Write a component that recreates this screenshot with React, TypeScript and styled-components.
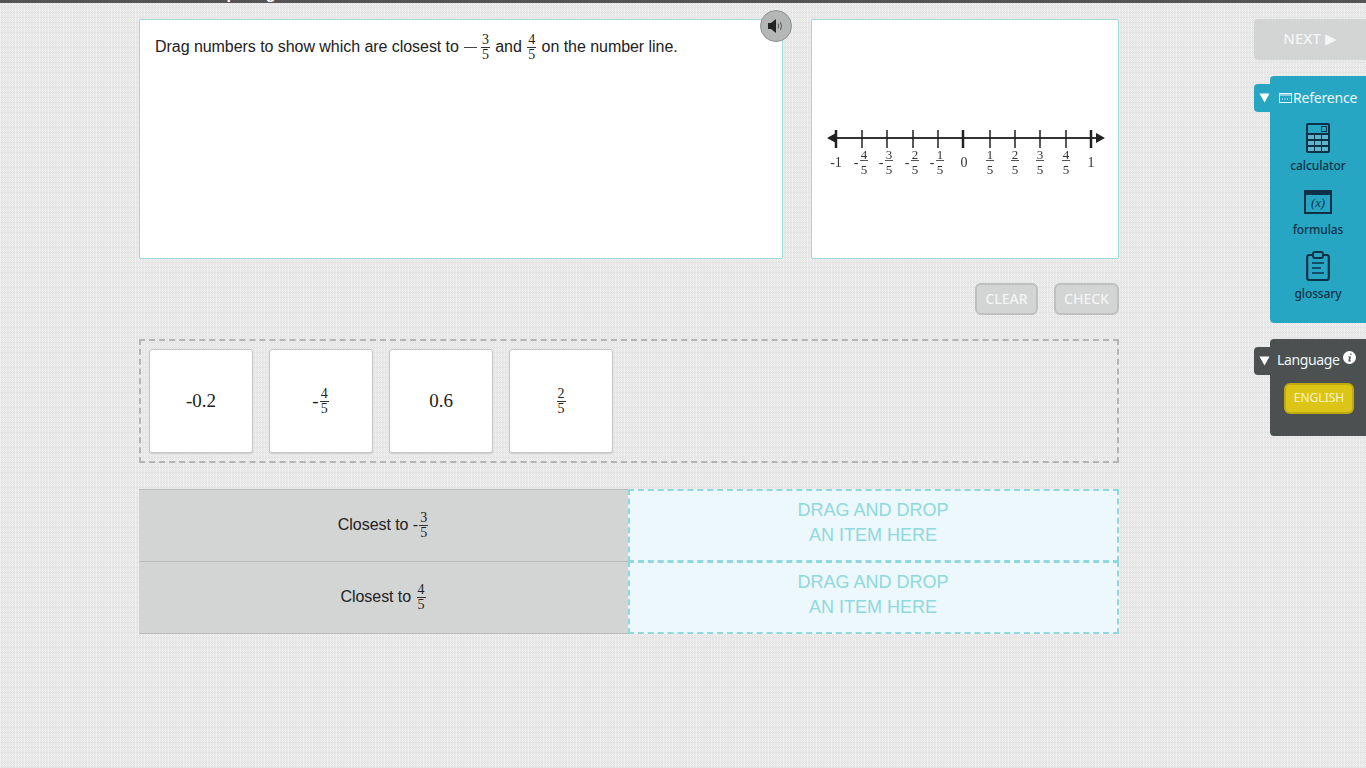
import React from "react";
import styled, { createGlobalStyle } from "styled-components";

const GlobalStyle = createGlobalStyle`
  html, body {
    margin: 0;
    padding: 0;
  }
  body {
    height: 768px;
    overflow: hidden;
    font-family: "Liberation Sans", Arial, sans-serif;
    color: #222;
    background-color: #e9e9e9;
    background-image:
      repeating-linear-gradient(90deg, rgba(255, 255, 255, 0.22) 0 1px, transparent 1px 3px),
      repeating-linear-gradient(0deg, rgba(0, 0, 0, 0.025) 0 1px, transparent 1px 5px),
      repeating-conic-gradient(#e3e3e3 0 25%, #ededed 0 50%);
    background-size: auto, auto, 2px 2px;
  }
`;

const SIDE_FONT = `"Noto Sans", "Open Sans", sans-serif`;
const NAVY = "#0e3148";

const TopBar = styled.div`
  height: 3px;
  padding-left: 191px;
  background: #555;
  overflow: hidden;
`;

const TopTitle = styled.div`
  margin-top: -14px;
  color: #fff;
  font-size: 16px;
  font-weight: bold;
  line-height: 16px;
`;

const Page = styled.div`
  display: flex;
  align-items: flex-start;
  padding: 16px 0 0 139px;
`;

const Main = styled.main`
  width: 980px;
`;

const TopRow = styled.div`
  display: flex;
  gap: 28px;
`;

const Panel = styled.section<{ $width: number }>`
  position: relative;
  box-sizing: border-box;
  width: ${(p) => p.$width}px;
  height: 240px;
  background: #fff;
  border: 1px solid #9fd9dc;
  border-radius: 2px;
`;

const Question = styled.p`
  display: flex;
  align-items: center;
  height: 26px;
  margin: 0;
  padding: 14px 15px 0;
  font-size: 16px;
  letter-spacing: -0.05px;
  white-space: pre;
  color: #222;
`;

const Minus = styled.span`
  display: inline-block;
  width: 13px;
  height: 1px;
  margin: 1px 3px 0 5px;
  background: #444;
`;

const SpeakerButton = styled.button`
  position: absolute;
  top: -10px;
  right: -10px;
  display: flex;
  align-items: center;
  justify-content: center;
  box-sizing: border-box;
  width: 32px;
  height: 32px;
  padding: 0;
  border: 1px solid #8f9292;
  border-radius: 50%;
  background: #b5b7b7;
`;

const FractionBox = styled.span`
  display: inline-flex;
  flex-direction: column;
  align-items: center;
  vertical-align: middle;
  margin: 0 1px;
  font-family: "Liberation Serif", "Times New Roman", serif;
  font-size: 14px;
  line-height: 12px;
  letter-spacing: 0;
  color: #222;
`;

const FractionTop = styled.span`
  display: block;
  padding: 0 1px 1px;
  border-bottom: 1px solid #333;
`;

const FractionBottom = styled.span`
  display: block;
  padding: 1px 1px 0;
`;

const Fraction = ({ top, bottom }: { top: number; bottom: number }) => (
  <FractionBox>
    <FractionTop>{top}</FractionTop>
    <FractionBottom>{bottom}</FractionBottom>
  </FractionBox>
);

const Actions = styled.div`
  display: flex;
  justify-content: flex-end;
  gap: 16px;
  margin-top: 24px;
`;

const ActionButton = styled.button<{ $width: number }>`
  box-sizing: border-box;
  width: ${(p) => p.$width}px;
  height: 32px;
  padding: 0 0 2px;
  border: 2px solid #bfc1c1;
  border-radius: 6px;
  background: #d3d4d4;
  color: #f3f4f4;
  font-family: ${SIDE_FONT};
  font-size: 14px;
  font-weight: 500;
`;

const Tray = styled.div`
  display: flex;
  gap: 16px;
  box-sizing: border-box;
  height: 124px;
  margin-top: 24px;
  padding: 8px;
  border: 2px dashed #b4b4b4;
`;

const Card = styled.div`
  display: flex;
  align-items: center;
  justify-content: center;
  box-sizing: border-box;
  width: 104px;
  height: 104px;
  background: #fff;
  border: 1px solid #c6c6c6;
  border-radius: 3px;
  box-shadow: 0 1px 1px rgba(0, 0, 0, 0.12);
  font-family: "Liberation Serif", "Times New Roman", serif;
  font-size: 19px;
  color: #222;
`;

const MatchTable = styled.div`
  display: grid;
  grid-template-columns: 489px 491px;
  grid-auto-rows: 72px;
  margin-top: 26px;
  border-bottom: 1px solid #b9b9b9;
`;

const RowLabel = styled.div`
  box-sizing: border-box;
  padding-top: 21px;
  background: #d3d4d4;
  border-top: 1px solid #bcbcbc;
  font-size: 16px;
  letter-spacing: -0.05px;
  line-height: 28px;
  text-align: center;
  color: #222;
`;

const DropZone = styled.div`
  display: flex;
  align-items: center;
  justify-content: center;
  box-sizing: border-box;
  height: 73px;
  padding: 0 1px 6px 0;
  background: #ecf8fb;
  border: 2px dashed #8fd8de;
  color: #8fd8de;
  font-size: 18px;
  line-height: 25px;
  text-align: center;
`;

const Side = styled.aside`
  display: flex;
  flex-direction: column;
  width: 112px;
  margin-left: 135px;
  font-family: ${SIDE_FONT};
`;

const NextButton = styled.button`
  box-sizing: border-box;
  width: 112px;
  height: 41px;
  padding: 0 0 4px;
  border: 0;
  border-radius: 4px 0 0 4px;
  background: #d3d4d4;
  color: #f5f5f5;
  font-family: ${SIDE_FONT};
  font-size: 15px;
  font-weight: 500;
`;

const SidePanel = styled.section<{ $color: string; $height: number; $top: number }>`
  position: relative;
  box-sizing: border-box;
  width: 96px;
  height: ${(p) => p.$height}px;
  margin: ${(p) => p.$top}px 0 0 16px;
  background: ${(p) => p.$color};
  border-radius: 4px 0 0 4px;
`;

const PanelTab = styled.span<{ $color: string }>`
  position: absolute;
  top: 8px;
  left: -16px;
  display: flex;
  align-items: center;
  justify-content: center;
  width: 20px;
  height: 28px;
  background: ${(p) => p.$color};
  border-radius: 4px 0 0 4px;
  color: #fff;
`;

const PanelTitle = styled.div`
  display: flex;
  align-items: center;
  gap: 1px;
  height: 42px;
  padding-left: 9px;
  color: #eef8fa;
  font-size: 14px;
  letter-spacing: -0.2px;
`;

const Tool = styled.div`
  display: flex;
  flex-direction: column;
  align-items: center;
  height: 64px;
  color: ${NAVY};
  font-size: 12px;
  font-weight: 500;
  letter-spacing: -0.1px;
  line-height: 16px;
`;

const ToolIcon = styled.div`
  display: flex;
  align-items: center;
  justify-content: center;
  height: 40px;
`;

const LanguageTitle = styled(PanelTitle)`
  gap: 3px;
  height: 40px;
  padding-left: 7px;
  letter-spacing: -0.35px;
  svg {
    margin-top: -3px;
  }
`;

const LanguageButton = styled.button`
  display: block;
  box-sizing: border-box;
  width: 70px;
  height: 31px;
  margin: 4px 0 0 14px;
  padding: 0 0 2px;
  border: 2px solid #bfa90f;
  border-radius: 6px;
  background: #dcc516;
  color: #f8f3c4;
  font-family: ${SIDE_FONT};
  font-size: 12px;
`;

const LineFigure = styled.svg`
  display: block;
  filter: blur(0.3px);
`;

const Triangle = () => (
  <svg width="11" height="10" viewBox="0 0 11 10">
    <path d="M0.5 0.5h10L5.5 9.5z" fill="#fff" />
  </svg>
);

const SpeakerIcon = () => (
  <svg width="18" height="16" viewBox="0 0 18 16">
    <path d="M1 5h3l5-4v14l-5-4H1z" fill="#222" />
    <path d="M11 5.5q1.4 2.5 0 5M13.5 4q2 4 0 8" fill="none" stroke="#555" strokeWidth="1" />
  </svg>
);

const CalculatorIcon = () => (
  <svg width="24" height="30" viewBox="0 0 24 30">
    <rect width="24" height="30" rx="2" fill={NAVY} />
    <rect x="2" y="2" width="20" height="8" fill="#27a6c4" />
    <rect x="15.500" y="3.500" width="5" height="5" fill="#27a6c4" stroke={NAVY} />
    {[12, 18, 24].map((y) =>
      [2, 9, 16].map((x) => <rect key={`${x}-${y}`} x={x} y={y} width="6" height="4" fill="#5fb6cc" />)
    )}
  </svg>
);

const FormulaIcon = () => (
  <svg width="28" height="24" viewBox="0 0 28 24">
    <rect x="1" y="1" width="26" height="22" fill="none" stroke={NAVY} strokeWidth="2" />
    <rect x="0" y="0" width="28" height="5" fill={NAVY} />
    <text x="14" y="17" textAnchor="middle" fontFamily="Liberation Serif, serif" fontStyle="italic" fontSize="13" fill={NAVY}>
      (x)
    </text>
  </svg>
);

const GlossaryIcon = () => (
  <svg width="24" height="30" viewBox="0 0 24 30">
    <rect x="1.200" y="4" width="21.600" height="25" rx="2" fill="none" stroke={NAVY} strokeWidth="2.200" />
    <rect x="7" y="1" width="10" height="6" rx="2" fill="#27a6c4" stroke={NAVY} strokeWidth="2" />
    <path d="M6 12h12M6 17h9M6 22h12" stroke={NAVY} strokeWidth="1.500" />
  </svg>
);

const BookIcon = () => (
  <svg width="13" height="11" viewBox="0 0 13 11">
    <rect x="0.500" y="1.500" width="12" height="9" fill="none" stroke="#eef8fa" />
    <path d="M1 3h11" stroke="#eef8fa" />
    <path d="M3 7h1M5.500 7h1M8 7h1" stroke="#eef8fa" />
  </svg>
);

const InfoIcon = () => (
  <svg width="13" height="13" viewBox="0 0 13 13">
    <circle cx="6.500" cy="6.500" r="6.500" fill="#fff" />
    <path d="M7.200 2.500h1.200v1.400H7.200zM5.400 5.400h2.500l-.8 4h.9v1H5.300l.8-4h-.7z" fill="#4d5051" />
  </svg>
);

const TICKS = [24, 50, 75, 101, 126, 151, 178, 203, 228, 254, 279];
const LABELS = [4, 3, 2, 1];

const NumberLine = () => (
  <LineFigure width="306" height="238" viewBox="0 0 306 238">
    <g fontFamily="Liberation Serif, serif" fontSize="14" fill="#333" textAnchor="middle">
      <path d="M18 118h272" stroke="#333" strokeWidth="2" />
      <path d="M15 118l9-5v10zM293 118l-9-5v10z" fill="#222" />
      {TICKS.map((x, i) => (
        <path
          key={x}
          d={`M${x} 110v18`}
          stroke="#222"
          strokeWidth={i === 0 || i === 5 || i === 10 ? 2.500 : 1.500}
        />
      ))}
      <text x="24" y="147">-1</text>
      <text x="152" y="147">0</text>
      <text x="279" y="147">1</text>
      {LABELS.map((n, i) => (
        <g key={`neg-${n}`}>
          <text x={TICKS[i + 1] - 6} y="147">-</text>
          <text x={TICKS[i + 1] + 2} y="139" fontSize="13">{n}</text>
          <path d={`M${TICKS[i + 1] - 2} 140.500h8`} stroke="#555" />
          <text x={TICKS[i + 1] + 2} y="154" fontSize="13">5</text>
        </g>
      ))}
      {[1, 2, 3, 4].map((n, i) => (
        <g key={`pos-${n}`}>
          <text x={TICKS[i + 6]} y="139" fontSize="13">{n}</text>
          <path d={`M${TICKS[i + 6] - 4} 140.500h8`} stroke="#555" />
          <text x={TICKS[i + 6]} y="154" fontSize="13">5</text>
        </g>
      ))}
    </g>
  </LineFigure>
);

export default function App() {
  return (
    <>
      <GlobalStyle />
      <TopBar>
        <TopTitle>Comparing</TopTitle>
      </TopBar>
      <Page>
        <Main>
          <TopRow>
            <Panel $width={644}>
              <Question>
                Drag numbers to show which are closest to
                <Minus />
                <Fraction top={3} bottom={5} /> and <Fraction top={4} bottom={5} /> on the number line.
              </Question>
              <SpeakerButton aria-label="Read aloud">
                <SpeakerIcon />
              </SpeakerButton>
            </Panel>
            <Panel $width={308}>
              <NumberLine />
            </Panel>
          </TopRow>

          <Actions>
            <ActionButton $width={63}>CLEAR</ActionButton>
            <ActionButton $width={65}>CHECK</ActionButton>
          </Actions>

          <Tray>
            <Card>-0.2</Card>
            <Card>
              -<Fraction top={4} bottom={5} />
            </Card>
            <Card>0.6</Card>
            <Card>
              <Fraction top={2} bottom={5} />
            </Card>
          </Tray>

          <MatchTable>
            <RowLabel>
              Closest to -<Fraction top={3} bottom={5} />
            </RowLabel>
            <DropZone>
              DRAG AND DROP
              <br />
              AN ITEM HERE
            </DropZone>
            <RowLabel>
              Closest to <Fraction top={4} bottom={5} />
            </RowLabel>
            <DropZone>
              DRAG AND DROP
              <br />
              AN ITEM HERE
            </DropZone>
          </MatchTable>
        </Main>

        <Side>
          <NextButton>NEXT ▶</NextButton>
          <SidePanel $color="#27a6c4" $height={247} $top={16}>
            <PanelTab $color="#27a6c4">
              <Triangle />
            </PanelTab>
            <PanelTitle>
              <BookIcon />
              Reference
            </PanelTitle>
            <Tool>
              <ToolIcon>
                <CalculatorIcon />
              </ToolIcon>
              calculator
            </Tool>
            <Tool>
              <ToolIcon>
                <FormulaIcon />
              </ToolIcon>
              formulas
            </Tool>
            <Tool>
              <ToolIcon>
                <GlossaryIcon />
              </ToolIcon>
              glossary
            </Tool>
          </SidePanel>
          <SidePanel $color="#4d5051" $height={97} $top={16}>
            <PanelTab $color="#4d5051">
              <Triangle />
            </PanelTab>
            <LanguageTitle>
              Language
              <InfoIcon />
            </LanguageTitle>
            <LanguageButton>ENGLISH</LanguageButton>
          </SidePanel>
        </Side>
      </Page>
    </>
  );
}
